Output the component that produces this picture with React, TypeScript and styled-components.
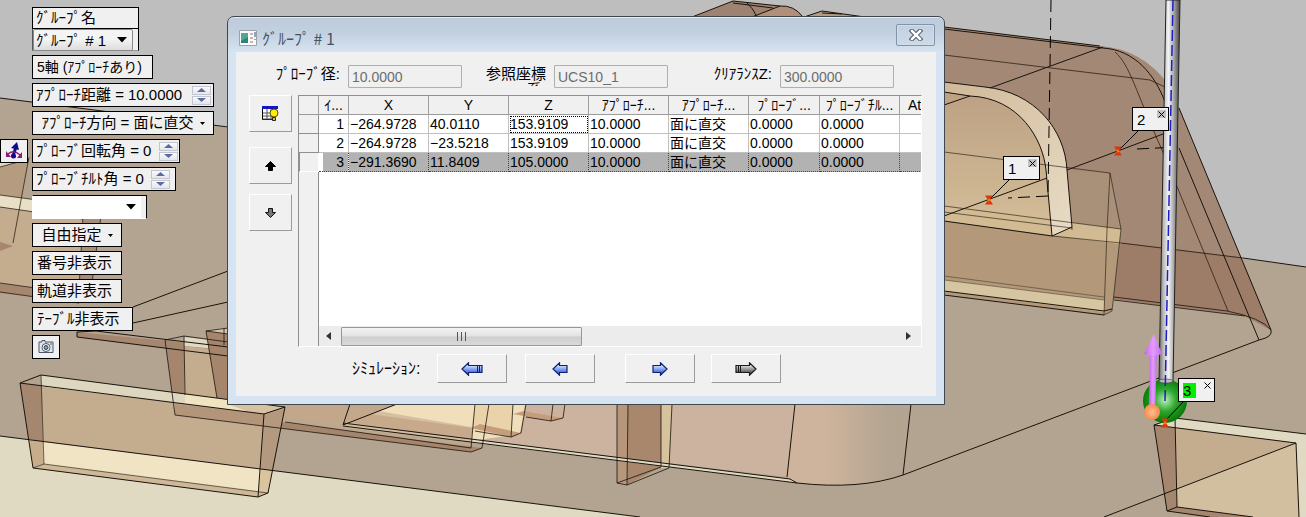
import React from "react";
import styled, { createGlobalStyle } from "styled-components";

const GlobalStyle = createGlobalStyle`
  * { box-sizing: border-box; }
  body {
    margin: 0;
    background: #bebebe;
    color: #000;
    font-family: "Liberation Sans", "Noto Sans CJK JP", sans-serif;
    font-size: 15px;
  }
  button, input, select { font: inherit; color: inherit; margin: 0; }
`;

const Stage = styled.main`
  position: relative;
  display: flex;
  align-items: flex-start;
  min-height: 100vh;
  overflow: hidden;
`;

const SceneSvg = styled.svg`
  position: absolute;
  inset: 0;
  width: 100%;
  height: 100%;
`;

/* ---------- floating controls ---------- */

const Controls = styled.section`
  position: relative;
  flex: 0 0 227px;
  display: flex;
  flex-direction: column;
  gap: 4px;
  padding-top: 7px;
`;

const ControlRow = styled.div`
  display: grid;
  grid-template-columns: 28px auto;
  column-gap: 4px;
  justify-content: start;
`;

const Slot = styled.div`
  grid-column: 2;
`;

const Chip = styled.div<{ $w: number; $h?: number }>`
  display: flex;
  align-items: center;
  gap: 4px;
  width: ${(p) => p.$w}px;
  height: ${(p) => p.$h ?? 24}px;
  padding: 0 3px;
  border: 1px solid #000;
  background: #f0f0f0;
  line-height: 20px;
  white-space: nowrap;
`;

const ChipButton = styled.button<{ $w: number; $center?: boolean; $small?: boolean }>`
  display: flex;
  align-items: center;
  justify-content: ${(p) => (p.$center ? "center" : "flex-start")};
  gap: 6px;
  width: ${(p) => p.$w}px;
  height: 24px;
  padding: 0 4px;
  border: 1px solid #000;
  background: #f0f0f0;
  font-size: ${(p) => (p.$small ? 14 : 15)}px;
  line-height: 20px;
  white-space: nowrap;
`;

const ValueInput = styled.input<{ $w: number }>`
  width: ${(p) => p.$w}px;
  height: 20px;
  padding: 0;
  border: 0;
  background: transparent;
`;

const SpinBox = styled.span`
  display: flex;
  flex-direction: column;
  gap: 1px;
`;

const SpinButton = styled.button`
  display: grid;
  place-items: center;
  width: 19px;
  height: 9px;
  padding: 0;
  border: 1px solid #c3c6cf;
  background: linear-gradient(#fafafa, #e4e6ee);
`;

const ComboFrame = styled.div<{ $w: number; $white?: boolean }>`
  display: grid;
  width: ${(p) => p.$w}px;
  height: ${(p) => (p.$white ? 24 : 22)}px;
  padding-right: 5px;
  border: 1px solid #000;
  border-left-color: ${(p) => (p.$white ? "#fff" : "#555")};
  border-bottom-color: ${(p) => (p.$white ? "#fff" : "#999")};
  border-top-width: ${(p) => (p.$white ? 1 : 0)}px;
  background: #f0f0f0;
  align-items: center;

  & > * { grid-area: 1 / 1; }
  & > svg { justify-self: end; margin-right: ${(p) => (p.$white ? 5 : 6)}px; pointer-events: none; }
`;

const Combo = styled.select<{ $white?: boolean }>`
  appearance: none;
  width: 100%;
  height: 22px;
  padding: 0 2px;
  border: ${(p) => (p.$white ? "0" : "1px solid #8a8a8a")};
  border-radius: ${(p) => (p.$white ? 0 : 2)}px;
  background: ${(p) => (p.$white ? "#fff" : "linear-gradient(#f4f4f4 45%, #dcdcdc)")};
`;

/* ---------- dialog ---------- */

const Dialog = styled.section`
  position: relative;
  flex: 0 1 718px;
  min-width: 0;
  margin-top: 16px;
  padding: 0 8px 8px;
  border: 1px solid #3f464e;
  border-radius: 7px 7px 0 0;
  background: linear-gradient(#bccad9 0, #c3d0df 16px, #d6e4f2 35px);
  box-shadow: inset 0 1px 0 #e3ebf3;
`;

const TitleBar = styled.header`
  display: flex;
  align-items: center;
  gap: 5px;
  height: 35px;
  padding: 7px 1px 0 3px;
`;

const Title = styled.h1`
  flex: 1;
  margin: 0;
  font-family: "Noto Sans CJK JP", sans-serif;
  font-size: 16px;
  font-weight: 400;
  line-height: 20px;
  color: #465565;
`;

const CloseButton = styled.button`
  display: grid;
  place-items: center;
  width: 39px;
  height: 22px;
  margin-bottom: 6px;
  padding: 0;
  border: 1px solid #7f93aa;
  border-radius: 2px;
  background: linear-gradient(#c3d0df, #cddae8);
  box-shadow: inset 0 0 0 1px #d3deea;
`;

const Body = styled.div`
  height: 344px;
  padding-top: 13px;
  background: #f0f0f0;
`;

const Fields = styled.div`
  display: grid;
  grid-template-columns: 112fr 114fr 92fr 114fr 112fr 114fr 42fr;
  align-items: start;
  height: 30px;
`;

const FieldLabel = styled.label<{ $wrap?: boolean }>`
  justify-self: end;
  max-width: ${(p) => (p.$wrap ? "68px" : "none")};
  height: 21px;
  padding: 1px 8px 0 0;
  overflow: hidden;
  line-height: 16px;
  text-align: right;
  white-space: ${(p) => (p.$wrap ? "normal" : "nowrap")};
`;

const Field = styled.input`
  width: 100%;
  min-width: 0;
  height: 23px;
  padding: 0 3px;
  border: 1px solid #afafaf;
  border-radius: 1px;
  background: #f0f0f0;
  color: #6d6d6d;
  font-size: 14px;
`;

const Main = styled.div`
  display: flex;
  padding: 0 14px 0 13px;
`;

const SideButtons = styled.div`
  display: flex;
  flex-direction: column;
  flex: 0 0 49px;
  gap: 10px;
`;

const RaisedButton = styled.button<{ $w: number; $h: number; $after?: number }>`
  display: grid;
  place-items: center;
  width: ${(p) => p.$w}px;
  height: ${(p) => p.$h}px;
  margin-bottom: ${(p) => p.$after ?? 0}px;
  padding: 0;
  border: 1px solid;
  border-color: #fff #9b9b9b #9b9b9b #fff;
  background: #f0f0f0;
`;

const GridFrame = styled.div`
  flex: 1;
  min-width: 0;
  height: 252px;
  display: flex;
  flex-direction: column;
  overflow: hidden;
  border: 1px solid;
  border-color: #8f8f8f #fff #fff #8f8f8f;
  background: linear-gradient(to right, #f0f0f0 19px, #8f8f8f 19px, #8f8f8f 20px, #fff 20px);
`;

const TableClip = styled.div`
  flex: 1;
  overflow: hidden;
`;

const Table = styled.table`
  width: 661px;
  table-layout: fixed;
  border-collapse: separate;
  border-spacing: 0;
  font-size: 14px;
  line-height: 18px;
`;

const HeadCell = styled.th<{ $left?: boolean }>`
  height: 19px;
  padding: 0 0 0 ${(p) => (p.$left ? 8 : 0)}px;
  border-right: 1px solid #a0a0a0;
  border-bottom: 1px solid #9b9b9b;
  background: #f0f0f0;
  font-weight: 400;
  text-align: ${(p) => (p.$left ? "left" : "center")};
  white-space: nowrap;
`;

const RowHead = styled.th<{ $on?: boolean }>`
  height: 19px;
  padding: 0;
  border-right: 1px solid ${(p) => (p.$on ? "#fff" : "#8f8f8f")};
  border-bottom: 1px solid ${(p) => (p.$on ? "#fff" : "#8f8f8f")};
  border-left: ${(p) => (p.$on ? "1px solid #8f8f8f" : "0")};
  background: #f0f0f0;
`;

const Cell = styled.td<{ $on?: boolean; $num?: boolean; $focus?: boolean }>`
  height: 19px;
  padding: 0 ${(p) => (p.$num ? 4 : 0)}px 0 1px;
  border-right: 1px ${(p) => (p.$on ? "dotted #444" : "solid #c0c0c0")};
  border-bottom: 1px ${(p) => (p.$on ? "dotted #444" : "solid #c0c0c0")};
  background: ${(p) =>
    p.$on ? (p.$num ? "linear-gradient(to right, #fff 4px, #b2b2b2 4px)" : "#b2b2b2") : "#fff"};
  outline: ${(p) => (p.$focus ? "1px dotted #000" : "none")};
  outline-offset: -2px;
  text-align: ${(p) => (p.$num ? "right" : "left")};
  white-space: nowrap;
`;

const ScrollRow = styled.div`
  display: flex;
  align-items: center;
  height: 20px;
  margin-left: 20px;
  background: #ececec;
`;

const ScrollArrow = styled.button`
  display: grid;
  place-items: center;
  width: 22px;
  height: 19px;
  padding: 0 3px 0 0;
  border: 0;
  background: transparent;
`;

const ScrollThumb = styled.div`
  display: grid;
  place-items: center;
  flex: 0 0 241px;
  height: 19px;
  margin-right: auto;
  border: 1px solid #979797;
  border-radius: 1px;
  background: linear-gradient(#f3f3f3 0, #e2e2e2 48%, #cecece 52%, #d9d9d9);
`;

const Simulation = styled.div`
  display: flex;
  align-items: center;
  padding: 7px 0 0 116px;
`;

const SimLabel = styled.span`
  flex: 0 0 85px;
  font-size: 16px;
  line-height: 20px;
`;

const SimGroup = styled.div<{ $gap: number }>`
  display: flex;
  gap: ${(p) => p.$gap}px;
  margin-right: 30px;
`;

/* ---------- point callouts on the 3D view ---------- */

const Callout = styled.div<{ $x: number; $y: number; $on?: boolean }>`
  position: absolute;
  left: ${(p) => p.$x}px;
  top: ${(p) => p.$y}px;
  display: flex;
  justify-content: space-between;
  width: 37px;
  height: 24px;
  padding: 2px 2px 0 4px;
  border: 1px solid #000;
  background: #f0f0f0;

  & > span {
    width: 13px;
    height: 15px;
    margin-top: 2px;
    background: ${(p) => (p.$on ? "#00f000" : "transparent")};
    line-height: 16px;
  }
  & > button {
    display: grid;
    place-items: center;
    width: 9px;
    height: 8px;
    padding: 0;
    border: 0;
    background: ${(p) => (p.$on ? "transparent" : "#c4c4c4")};
  }
`;

/* ---------- icons ---------- */

const Caret = ({ small }: { small?: boolean }) =>
  small ? (
    <svg width="5" height="3" aria-hidden="true"><path d="M0 0h5L2.500 3z" /></svg>
  ) : (
    <svg width="10" height="6" aria-hidden="true"><path d="M0 0h10L5 5.500z" /></svg>
  );

const Spinner = ({ name }: { name: string }) => (
  <SpinBox>
    <SpinButton aria-label={`${name} +`}>
      <svg width="9" height="4"><path d="M0 4h9L4.500 0z" fill="#5a6ba5" /></svg>
    </SpinButton>
    <SpinButton aria-label={`${name} -`}>
      <svg width="9" height="4"><path d="M0 0h9L4.500 4z" fill="#5a6ba5" /></svg>
    </SpinButton>
  </SpinBox>
);

const AxisIcon = () => (
  <svg width="18" height="18" viewBox="0 0 18 18" aria-hidden="true">
    <path d="M8 14L11 5" stroke="#0b0b8c" strokeWidth="3" />
    <path d="M12 0L6 6l8 2z" fill="#0b0b8c" />
    <circle cx="8.500" cy="14" r="2.500" fill="#0b0b8c" />
    <path d="M3 12q6-5 12 1" fill="none" stroke="#8a1c74" strokeWidth="1.500" />
    <path d="M1 9v6h5zM17 10v6h-5z" fill="#8a1c74" />
  </svg>
);

const CameraIcon = () => (
  <svg width="16" height="14" viewBox="0 0 16 14" aria-hidden="true">
    <path d="M1 2h3V.500h3V2h8v10.500H1z" fill="#dfe7ee" stroke="#4c5866" />
    <circle cx="8" cy="7.500" r="4" fill="#fff" stroke="#4c5866" />
    <circle cx="8" cy="7.500" r="2" fill="#8aa0ba" stroke="#2c3c52" />
    <path d="M12 4h2" stroke="#4c5866" />
  </svg>
);

const WindowIcon = () => (
  <svg width="18" height="16" viewBox="0 0 18 16" aria-hidden="true">
    <path d="M.5.500h17v15H.500z" fill="#fafafa" stroke="#9aa3ab" />
    <path d="M2 3h7v10H2z" fill="#2f8478" />
    <path d="M2 3h7v4L2 11z" fill="#55a596" />
    <path d="M11 4h3M11 8h3M11 12h3" stroke="#c9b8b0" strokeWidth="2" />
    <path d="M16 2v5M16 9v1" stroke="#3a4a8a" />
  </svg>
);

const CloseIcon = () => (
  <svg width="14" height="12" viewBox="0 0 14 12" aria-hidden="true">
    <path d="M3 2l8 8M11 2l-8 8" stroke="#4b5662" strokeWidth="4.500" strokeLinecap="square" />
    <path d="M3 2l8 8M11 2l-8 8" stroke="#fff" strokeWidth="2.500" strokeLinecap="square" />
  </svg>
);

const TableBulbIcon = () => (
  <svg width="17" height="15" viewBox="0 0 17 15" aria-hidden="true">
    <path d="M.5 1v12.500H10" fill="none" stroke="#000" />
    <path d="M1 3h13v10H1z" fill="#fff" />
    <path d="M0 0h16v3H0z" fill="#1414c8" />
    <path d="M5 3v10M9 3v10M1 7h10M1 10h10M1 13h10" stroke="#555" />
    <circle cx="12" cy="7" r="4" fill="#ffee00" stroke="#554d00" />
    <path d="M10.500 11.500h3v3h-3z" fill="#dccb00" stroke="#222" />
  </svg>
);

const VerticalArrow = ({ down }: { down?: boolean }) => (
  <svg width="11" height="10" viewBox="0 0 11 10" aria-hidden="true">
    {down ? (
      <path d="M3.500.500h4v4h3L5.500 9.500l-5-5h3z" fill="#777" stroke="#111" />
    ) : (
      <path d="M3.500 9.500h4v-4h3L5.500.500l-5 5h3z" fill="#000" stroke="#000" />
    )}
  </svg>
);

type ArrowKind = "first" | "prev" | "next" | "last";

const PlayArrow = ({ kind }: { kind: ArrowKind }) => {
  const gray = kind === "last";
  const right = kind === "next" || gray;
  const long = kind === "first" || gray;
  const w = long ? 22 : 16;
  const id = `arrow-${kind}`;
  return (
    <svg width={w} height="14" viewBox={`0 0 ${w} 14`} aria-hidden="true">
      <defs>
        <linearGradient id={id} x2="0" y2="1">
          <stop offset="0.2" stopColor={gray ? "#e4e4e4" : "#d5e4ff"} />
          <stop offset="0.8" stopColor={gray ? "#555" : "#3f66e8"} />
        </linearGradient>
      </defs>
      <g transform={right ? `translate(${w} 0) scale(-1 1)` : undefined}>
        <path
          d={`M1 7L7.500.800V3.500H${w - 1}v7H7.500v2.700z`}
          fill={`url(#${id})`}
          stroke={gray ? "#1b1b1b" : "#10206c"}
          strokeWidth="1.200"
        />
        {long && <path d="M16.500 4v6M18.500 4v6" stroke={gray ? "#1b1b1b" : "#10206c"} />}
      </g>
    </svg>
  );
};

const SmallCross = () => (
  <svg width="7" height="7" aria-hidden="true">
    <path d="M.5.500l6 6M6.500.500l-6 6" stroke="#000" />
  </svg>
);

const Hourglass = ({ x, y }: { x: number; y: number }) => (
  <g transform={`translate(${x} ${y})`}>
    <path d="M-4-4.500h8L1 0l3 4.500h-8L-1 0z" fill="#d8390c" />
    <circle r="1.500" fill="#f07818" />
  </g>
);

/* ---------- 3D model ---------- */

const Scene = () => (
  <SceneSvg viewBox="0 0 1306 517" preserveAspectRatio="xMinYMin slice" aria-hidden="true">
    <defs>
      <linearGradient id="cyl" x2="1">
        <stop offset="0" stopColor="#ceb49d" />
        <stop offset="0.3" stopColor="#cfb49c" />
        <stop offset="0.8" stopColor="#b4a592" />
        <stop offset="1" stopColor="#b2a491" />
      </linearGradient>
      <linearGradient id="band" x2="1" y2="1">
        <stop offset="0" stopColor="#d0b898" />
        <stop offset="1" stopColor="#e8dcc6" />
      </linearGradient>
      <linearGradient id="cave" x2="0" y2="1">
        <stop offset="0" stopColor="#bca184" />
        <stop offset="1" stopColor="#d5bf98" />
      </linearGradient>
      <linearGradient id="rod" x2="1">
        <stop offset="0" stopColor="#666" />
        <stop offset="0.2" stopColor="#b8b8b8" />
        <stop offset="0.45" stopColor="#f4f4f8" />
        <stop offset="0.7" stopColor="#a8a8a8" />
        <stop offset="1" stopColor="#444" />
      </linearGradient>
      <radialGradient id="ball" cx="0.500" cy="0.480">
        <stop offset="0" stopColor="#b8f0b8" />
        <stop offset="0.5" stopColor="#2fa82f" />
        <stop offset="1" stopColor="#087a08" />
      </radialGradient>
      <radialGradient id="tip"><stop offset="0" stopColor="#ffc08c" /><stop offset="1" stopColor="#f58a50" /></radialGradient>
      <linearGradient id="shaft" x2="1">
        <stop offset="0" stopColor="#c467e8" />
        <stop offset="0.5" stopColor="#e39cff" />
        <stop offset="1" stopColor="#c070e8" />
      </linearGradient>
    </defs>

    <path d="M0 0h1306v517H0z" fill="#bebebe" />
    <path d="M0 98L1306 267V517H0z" fill="#b2a491" />
    <path d="M0 436L640 517H0z" fill="#e0dac2" />

    {/* bosses above the dialog */}
    <path d="M692 17L733 1l47 5q14-1 23 11z" fill="#9e8373" />
    <path d="M752 17l28-11q14-1 23 11z" fill="#b18f78" />
    <path d="M804 17l18-6 43 6z" fill="#b29c85" />

    {/* large housing on the right */}
    <path d="M944 27L1100 46Q1142 49 1168 84L1179 108 1271 330 1245 316 944 278z" fill="#a48876" />
    <path d="M1121 243L1241 258 1271 330 1245 316 1112 299z" fill="#9d7d68" />
    <path d="M944 92L970 96C1020 98 1043 140 1046 170L1052 236 944 221z" fill="url(#cave)" />
    <path d="M1067 170L1110 173 1121 229 1072 227z" fill="#a99078" />
    <path d="M944 206L1121 229 1119 245 944 221z" fill="#d2ba92" />
    <path d="M944 221L1119 244 1112 310 1104 315 944 294z" fill="#b39879" />
    <path d="M944 280L1104 300V312L944 291z" fill="#d6c5a1" />
    <path d="M944 82L985 87C1035 92 1065 130 1067 170L1072 227 1052 236 1046 170C1043 140 1020 98 970 96L944 92z" fill="url(#band)" />

    {/* wall and column under the dialog */}
    <path d="M343 425L350 404H795L787 477z" fill="#ccb39f" />
    <path d="M350 404h-9L228 404V411L343 425z" fill="#bda488" />
    <path d="M795 404H911L903 475Q860 490 797 483L787 477z" fill="url(#cyl)" />
    <path d="M343 425L397 404H525L520 434 470 441z" fill="#f0dfba" />
    <path d="M343 425L350 404h47z" fill="#c1a68a" />
    <path d="M471 428L475 404H513L511 437z" fill="#ead3aa" />
    <path d="M345 422L471 440 473 428 370 414z" fill="#cbab8b" />
    <path d="M471 428L511 437 521 433 480 424zM513 414L551 421 563 418 524 411z" fill="#c69d7b" />
    <path d="M617 404H628L627 485 617 483z" fill="#b7977b" />
    <path d="M628 404h33v63L627 485z" fill="#a8876d" />
    <path d="M661 404h11L669 468h-8z" fill="#d6c29d" />
    <path d="M343 423L790 479 797 483 343 427z" fill="#e0dac2" />

    {/* rear left pockets */}
    <path d="M77 332L228 347V356L77 337z" fill="#a5876f" />
    <path d="M184 337L228 342V350L184 346z" fill="#e0dac2" />
    <path d="M165 340L184 343V410L175 415z" fill="#a5866d" />
    <path d="M184 346L228 351V404L185 410z" fill="#c4ac8f" />
    <path d="M206 331L228 328V400L217 398z" fill="#a5866d" />
    <path d="M206 331L224 328 228 329V334z" fill="#d3c5ab" />
    <path d="M185 394L285 407 264 414 185 404z" fill="#f0e4c0" />
    <path d="M228 404h110L471 427V448L285 426z" fill="#c4aa8c" opacity="0.6" />
    <path d="M175 415L185 410 482 448 471 452z" fill="#a5866d" />

    {/* front left pocket */}
    <path d="M41 375L185 394V404L42 387z" fill="#ddd7c0" />
    <path d="M20 383L42 386 43 442 29 439z" fill="#a5876f" />
    <path d="M29 439L43 442 44 464 33 468z" fill="#c7ad8c" />
    <path d="M42 387L264 414 261 469 43 442z" fill="#c4ac8f" />
    <path d="M175 404L264 414V426L175 415z" fill="#b3957a" />
    <path d="M43 442L261 469 259 491 44 464z" fill="#f0e4c4" />
    <path d="M264 414L285 407 273 471 261 469z" fill="#b39a7e" />
    <path d="M261 469L273 471 268 493 258 497z" fill="#d9c49f" />
    <path d="M33 468L44 464 268 493 258 497z" fill="#cfb898" />

    {/* left edge pocket */}
    <path d="M0 168V162L29 157v3z" fill="#e0dac2" />
    <path d="M0 167L29 159 13 243 0 247z" fill="#b59b80" />
    <path d="M0 195L82 206V219L0 207z" fill="#e8dfc4" />
    <path d="M0 207L83 219 79 294 0 283z" fill="#c4ac8f" />
    <path d="M0 242l13 4-13 5z" fill="#a5876f" />
    <path d="M83 216h18L91 290H79z" fill="#a78d76" />
    <path d="M0 283L80 294V303L0 293z" fill="#a5876f" />

    {/* front right pocket */}
    <path d="M1175 418L1306 434V517H1299L1296 443 1154 425z" fill="#e0dac2" />
    <path d="M1154 425L1175 428 1177 507 1167 511z" fill="#a5876f" />
    <path d="M1175 428L1296 443 1176 489z" fill="#c4ac8f" />
    <path d="M1296 443L1299 517H1253L1177 507 1176 489z" fill="#d2bfa0" />
    <path d="M1167 511L1177 507 1253 517H1210z" fill="#a5876f" />

    <g fill="none" stroke="#1a130c">
      <path d="M0 98L228 127M1243 258L1306 267M0 436L640 517" />
      <path d="M133 307L228 271M133 323L228 302" />
      <path d="M692 17L733 1l47 5q14-1 23 11M733 3l40 5M752 17l28-11M747 3q6 5 10 14M804 17l18-6 43 6M822 13l20 1" />
      <path d="M944 27L1100 46M944 29L1103 48C1135 50 1155 75 1165 102M990 88L1103 47M1179 148L1259 340" />
      <path d="M944 55L1150 80 1165 87M1115 52C1130 65 1135 90 1162 150L1228 311" strokeWidth="0.700" />
      <path d="M1179 108L1271 330Q1273 337 1259 340L903 475Q860 490 797 483" />
      <path d="M1114 297L1227 311Q1262 318 1271 330M1114 300L1245 316M1121 243L1243 258" strokeWidth="0.800" />
      <path d="M944 82L985 87C1035 92 1065 130 1067 170L1072 227 1052 236 1046 170C1043 140 1020 98 970 96L944 92" />
      <path d="M944 105L970 96M944 216L1047 178M1067 170L1163 134M944 221L1052 236" />
      <path d="M944 152L1110 173 1121 229 1112 311 1104 315 1107 230 1110 173M1072 227V230M944 212L1072 228M944 206L1121 229M1052 236L1121 243" strokeWidth="0.600" />
      <path d="M944 276L1104 297M944 280L1104 300" strokeWidth="0.400" />
      <path d="M944 291L1104 311 1112 309M944 295L1104 315" />
      <path d="M795 404L787 477M911 404L903 475M350 404L343 425 397 404M343 423L790 479 797 483 343 426" />
      <path d="M285 422L471 448 475 404M175 415L471 452 482 448 489 404M513 404L511 437 475 431M511 437L521 433 526 404M553 404L551 421 526 417M551 421L563 418 565 404" strokeWidth="0.800" />
      <path d="M617 404V483L627 485 669 468 672 404M628 404L627 485M661 404V467L617 483" strokeWidth="0.800" />
      <path d="M77 337V332L96 331 228 347M77 337L228 356" />
      <path d="M175 415L165 340 184 336 228 342M184 336L185 395M217 398L206 331 228 328M206 331L228 334M224 328V345" strokeWidth="0.800" />
      <path d="M20 383L41 375 285 407 264 414zM20 383L33 468 258 497 268 493 285 407M264 414L258 497" />
      <path d="M41 375L44 464 268 493M33 468L44 464" strokeWidth="0.600" />
      <path d="M0 167L29 159M29 157L13 243M0 195L82 206M0 207L83 219M83 216L79 290M101 216L91 290M0 283L79 294M0 292L79 303" strokeWidth="0.700" />
      <path d="M1306 434L1175 418 1154 425 1296 443 1299 517M1296 443L1104 517M1154 425L1167 511 1210 517M1175 418L1177 507 1253 517M1167 511L1177 507" />
    </g>

    <g fill="none" stroke="#000">
      <path d="M1051 0L1048 196M1048 196L1008 198M1137 149L1178 147" strokeDasharray="12 6" />
      <path d="M1009 180L990 199M1138 131L1119 150" />
    </g>

    {/* probe */}
    <path d="M1166 0H1180L1173 381H1159z" fill="url(#rod)" stroke="#222" />
    <circle cx="1165" cy="401" r="22" fill="url(#ball)" />
    <ellipse cx="1166" cy="381" rx="7" ry="2" fill="#bbb" stroke="#333" strokeWidth="0.500" />
    <path d="M1173 0L1165 401" stroke="#1d1dc4" strokeWidth="1.500" strokeDasharray="11 4" />
    <path d="M1150 352h7L1155 412h-6z" fill="url(#shaft)" />
    <path d="M1144 354L1154 334 1162 354q-9 3-18 0z" fill="url(#shaft)" />
    <circle cx="1152" cy="412" r="8" fill="url(#tip)" />
    <path d="M1184 401L1167 419" stroke="#000" />

    <Hourglass x={989} y={200} />
    <Hourglass x={1118} y={151} />
    <Hourglass x={1165} y={423} />
  </SceneSvg>
);

/* ---------- data ---------- */

const columns = ["ｲ...", "X", "Y", "Z", "ｱﾌﾟﾛｰﾁ...", "ｱﾌﾟﾛｰﾁ...", "ﾌﾟﾛｰﾌﾞ...", "ﾌﾟﾛｰﾌﾞﾁﾙ...", "At"];
const widths = [20, 30, 80, 80, 80, 80, 80, 71, 80, 60];

const rows = [
  ["1", "−264.9728", "40.0110", "153.9109", "10.0000", "面に直交", "0.0000", "0.0000", ""],
  ["2", "−264.9728", "−23.5218", "153.9109", "10.0000", "面に直交", "0.0000", "0.0000", ""],
  ["3", "−291.3690", "11.8409", "105.0000", "10.0000", "面に直交", "0.0000", "0.0000", ""],
];

const points = [
  { n: 1, x: 1003, y: 156 },
  { n: 2, x: 1132, y: 107 },
  { n: 3, x: 1178, y: 378 },
];

export default function App() {
  const selected = 2;
  return (
    <Stage>
      <GlobalStyle />
      <Scene />

      <Controls>
        <ControlRow>
          <Slot>
            <Chip as="label" htmlFor="group" $w={107} $h={22}>ｸﾞﾙｰﾌﾟ名</Chip>
            <ComboFrame $w={107}>
              <Combo id="group"><option>ｸﾞﾙｰﾌﾟ # 1</option></Combo>
              <Caret />
            </ComboFrame>
          </Slot>
        </ControlRow>
        <ControlRow><Slot><ChipButton $w={121} $small>5軸 (ｱﾌﾟﾛｰﾁあり)</ChipButton></Slot></ControlRow>
        <ControlRow>
          <Slot>
            <Chip $w={182}>
              <label htmlFor="distance">ｱﾌﾟﾛｰﾁ距離 =</label>
              <ValueInput id="distance" $w={60} defaultValue="10.0000" />
              <Spinner name="距離" />
            </Chip>
          </Slot>
        </ControlRow>
        <ControlRow>
          <Slot><ChipButton $w={182} $center>ｱﾌﾟﾛｰﾁ方向 = 面に直交<Caret small /></ChipButton></Slot>
        </ControlRow>
        <ControlRow>
          <ChipButton $w={28} $center aria-label="軸"><AxisIcon /></ChipButton>
          <Chip $w={148}>
            <label htmlFor="rotation">ﾌﾟﾛｰﾌﾞ回転角 =</label>
            <ValueInput id="rotation" $w={12} defaultValue="0" />
            <Spinner name="回転角" />
          </Chip>
        </ControlRow>
        <ControlRow>
          <Slot>
            <Chip $w={144}>
              <label htmlFor="tilt">ﾌﾟﾛｰﾌﾞﾁﾙﾄ角 =</label>
              <ValueInput id="tilt" $w={12} defaultValue="0" />
              <Spinner name="ﾁﾙﾄ角" />
            </Chip>
          </Slot>
        </ControlRow>
        <ControlRow>
          <Slot>
            <ComboFrame $w={115} $white>
              <Combo $white aria-label="指定"><option></option></Combo>
              <Caret />
            </ComboFrame>
          </Slot>
        </ControlRow>
        <ControlRow><Slot><ChipButton $w={90} $center>自由指定<Caret small /></ChipButton></Slot></ControlRow>
        <ControlRow><Slot><ChipButton $w={90}>番号非表示</ChipButton></Slot></ControlRow>
        <ControlRow><Slot><ChipButton $w={90}>軌道非表示</ChipButton></Slot></ControlRow>
        <ControlRow><Slot><ChipButton $w={101}>ﾃｰﾌﾞﾙ非表示</ChipButton></Slot></ControlRow>
        <ControlRow><Slot><ChipButton $w={28} $center aria-label="カメラ"><CameraIcon /></ChipButton></Slot></ControlRow>
      </Controls>

      <Dialog role="dialog" aria-labelledby="dialog-title">
        <TitleBar>
          <WindowIcon />
          <Title id="dialog-title">ｸﾞﾙｰﾌﾟ # 1</Title>
          <CloseButton aria-label="閉じる"><CloseIcon /></CloseButton>
        </TitleBar>
        <Body>
          <Fields>
            <FieldLabel htmlFor="diameter">ﾌﾟﾛｰﾌﾞ径:</FieldLabel>
            <Field id="diameter" readOnly value="10.0000" />
            <FieldLabel htmlFor="ucs" $wrap>参照座標系:</FieldLabel>
            <Field id="ucs" readOnly value="UCS10_1" />
            <FieldLabel htmlFor="clearance">ｸﾘｱﾗﾝｽZ:</FieldLabel>
            <Field id="clearance" readOnly value="300.0000" />
          </Fields>
          <Main>
            <SideButtons>
              <RaisedButton $w={43} $h={37} $after={5} aria-label="表"><TableBulbIcon /></RaisedButton>
              <RaisedButton $w={43} $h={37} aria-label="上へ"><VerticalArrow /></RaisedButton>
              <RaisedButton $w={43} $h={37} aria-label="下へ"><VerticalArrow down /></RaisedButton>
            </SideButtons>
            <GridFrame>
              <TableClip>
                <Table>
                  <colgroup>{widths.map((w, i) => <col key={i} width={w} />)}</colgroup>
                  <thead>
                    <tr>
                      <HeadCell />
                      {columns.map((c, i) => <HeadCell key={i} $left={i === 8}>{c}</HeadCell>)}
                    </tr>
                  </thead>
                  <tbody>
                    {rows.map((r, ri) => (
                      <tr key={ri}>
                        <RowHead scope="row" $on={ri === selected} />
                        {r.map((v, ci) => (
                          <Cell key={ci} $on={ri === selected} $num={ci === 0} $focus={ri === 0 && ci === 3}>{v}</Cell>
                        ))}
                      </tr>
                    ))}
                  </tbody>
                </Table>
              </TableClip>
              <ScrollRow>
                <ScrollArrow aria-label="左"><svg width="5" height="8"><path d="M5 0v8L0 4z" fill="#333" /></svg></ScrollArrow>
                <ScrollThumb>
                  <svg width="11" height="9"><path d="M1.500 0v9M5.500 0v9M9.500 0v9" stroke="#555" /></svg>
                </ScrollThumb>
                <ScrollArrow aria-label="右"><svg width="5" height="8"><path d="M0 0v8L5 4z" fill="#333" /></svg></ScrollArrow>
              </ScrollRow>
            </GridFrame>
          </Main>
          <Simulation>
            <SimLabel>ｼﾐｭﾚｰｼｮﾝ:</SimLabel>
            <SimGroup $gap={18}>
              <RaisedButton $w={70} $h={29} aria-label="最初"><PlayArrow kind="first" /></RaisedButton>
              <RaisedButton $w={70} $h={29} aria-label="前"><PlayArrow kind="prev" /></RaisedButton>
            </SimGroup>
            <SimGroup $gap={16}>
              <RaisedButton $w={70} $h={29} aria-label="次"><PlayArrow kind="next" /></RaisedButton>
              <RaisedButton $w={70} $h={29} aria-label="最後"><PlayArrow kind="last" /></RaisedButton>
            </SimGroup>
          </Simulation>
        </Body>
      </Dialog>

      {points.map((p) => (
        <Callout key={p.n} $x={p.x} $y={p.y} $on={p.n === 3}>
          <span>{p.n}</span>
          <button aria-label={`${p.n} 閉じる`}><SmallCross /></button>
        </Callout>
      ))}
    </Stage>
  );
}
